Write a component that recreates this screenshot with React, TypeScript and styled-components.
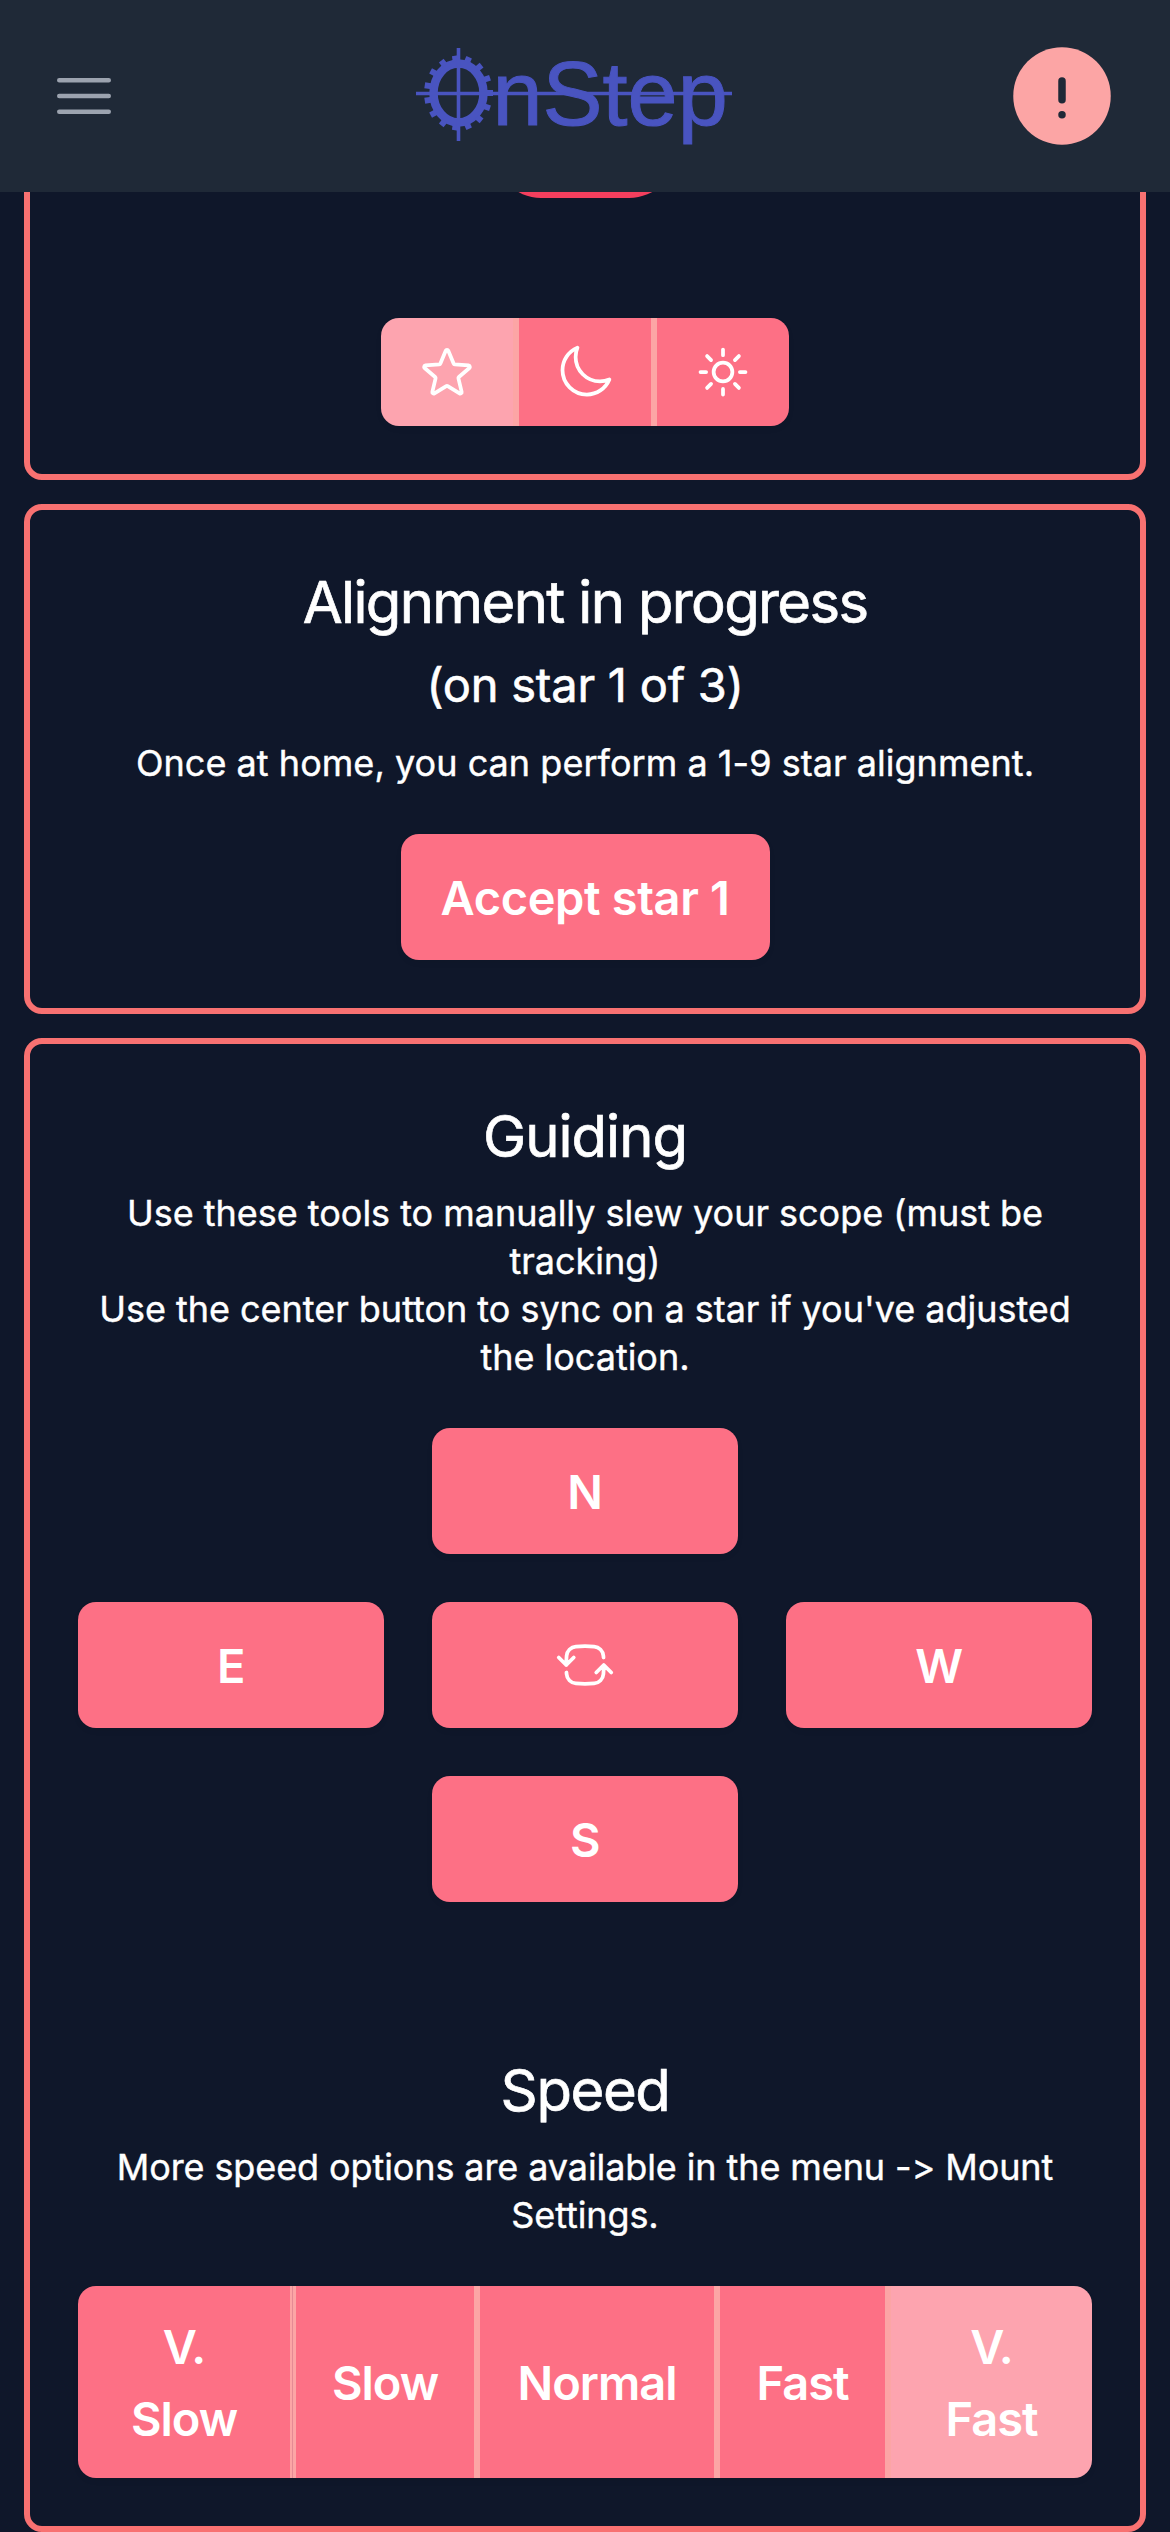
import React from "react";
import styled, { createGlobalStyle } from "styled-components";

const color = {
  page: "#0f172a",
  header: "#1f2937",
  border: "#f87171",
  button: "#fd7085",
  active: "#fda4af",
  divider: "#fca5a5",
  seam: "#e58a94",
  logo: "#4954c0",
};

const GlobalStyle = createGlobalStyle`
  * { box-sizing: border-box; }
  html, body {
    margin: 0;
    background: ${color.page};
  }
  body {
    height: 2532px;
    overflow: hidden;
    color: #fff;
    font-family: Inter, "Liberation Sans", sans-serif;
    font-feature-settings: "calt" 0, "liga" 0;
    font-variant-ligatures: none;
  }
  button {
    margin: 0;
    border: 0;
    padding: 0;
    color: inherit;
    font: inherit;
  }
`;

const Header = styled.header`
  position: fixed;
  inset: 0 0 auto 0;
  z-index: 10;
  height: 192px;
  padding: 0 48px;
  display: grid;
  grid-template-columns: 1fr auto 1fr;
  align-items: center;
  background: ${color.header};
`;

const MenuButton = styled.button`
  justify-self: start;
  display: flex;
  background: none;
  color: #9ca3af;
`;

const LogoLink = styled.a`
  display: flex;
  margin-right: 23px;
`;

const AlertButton = styled.button`
  justify-self: end;
  display: flex;
  margin-right: -48px;
  padding-right: 48px;
  background: none;
  color: ${color.divider};
`;

const Main = styled.main`
  display: flex;
  flex-direction: column;
  gap: 24px;
  padding: 48px 24px 0;
`;

const Card = styled.section`
  display: flex;
  flex-direction: column;
  align-items: center;
  padding: 48px;
  border: 6px solid ${color.border};
  border-radius: 18px;
  text-align: center;
`;

const StatusPill = styled.div`
  width: 184px;
  height: 96px;
  margin-bottom: 120px;
  border-radius: 48px;
  background: #f43f5e;
`;

const Title = styled.h2<{ $tracking: number }>`
  margin: 0 0 -2px;
  padding-top: 2px;
  font-size: 58px;
  line-height: 84px;
  font-weight: 400;
  letter-spacing: ${(p) => p.$tracking}px;
  -webkit-text-stroke: 0.7px currentColor;
`;

const Subtitle = styled.h3`
  margin: 7px 0 17px;
  font-size: 47px;
  line-height: 72px;
  font-weight: 400;
  letter-spacing: -0.23px;
  -webkit-text-stroke: 0.6px currentColor;
`;

const Text = styled.p<{ $top?: number; $tracking?: number }>`
  margin: ${(p) => p.$top ?? 0}px 0 47px;
  padding-top: 1px;
  font-size: 36px;
  line-height: 48px;
  letter-spacing: ${(p) => p.$tracking ?? 0}px;
  -webkit-text-stroke: 0.4px currentColor;
`;

const Button = styled.button`
  height: 126px;
  padding-top: 2px;
  border-radius: 18px;
  display: flex;
  align-items: center;
  justify-content: center;
  background: ${color.button};
  box-shadow: 0 3px 6px rgba(0, 0, 0, 0.05);
  font-size: 47px;
  line-height: 72px;
  font-weight: 600;
  letter-spacing: -0.38px;
`;

const AcceptButton = styled(Button)`
  width: 369px;
`;

const DirectionPad = styled.div`
  width: 100%;
  margin-bottom: 144px;
  display: grid;
  grid-template-columns: repeat(3, 1fr);
  grid-template-areas:
    ". n ."
    "e sync w"
    ". s .";
  gap: 48px;
`;

const PadButton = styled(Button)<{ $area: string; $icon?: boolean }>`
  grid-area: ${(p) => p.$area};
  padding-top: ${(p) => (p.$icon ? 0 : 2)}px;
`;

const Group = styled.div<{ $columns: string; $height: number }>`
  display: grid;
  grid-template-columns: ${(p) => p.$columns};
  height: ${(p) => p.$height}px;
  border-radius: 18px;
  overflow: hidden;
  box-shadow: 0 3px 6px rgba(0, 0, 0, 0.05);
`;

const Segment = styled.button<{ $active?: boolean }>`
  display: flex;
  align-items: center;
  justify-content: center;
  background: ${(p) => (p.$active ? color.active : color.button)};

  &:not(:last-child) {
    border-right: 6px solid ${color.divider};
  }
`;

const SpeedSegment = styled(Segment)<{ $seam?: boolean }>`
  padding-top: 2px;
  font-size: 47px;
  line-height: 72px;
  font-weight: 600;
  letter-spacing: -1px;

  &:not(:last-child) {
    border-image: ${(p) =>
      p.$seam
        ? `linear-gradient(to left, ${color.divider} 3px, ${color.seam} 3px 4px, ${color.divider} 4px) 0 6 0 0`
        : "none"};
  }
`;

const StrokeIcon = styled.svg<{ $size: number; $mirrored?: boolean }>`
  width: ${(p) => p.$size}px;
  height: ${(p) => p.$size}px;
  fill: none;
  stroke: currentColor;
  stroke-width: 1.5;
  stroke-linecap: round;
  stroke-linejoin: round;
  transform: ${(p) => (p.$mirrored ? "scaleX(-1)" : "none")};
`;

const LogoSvg = styled.svg`
  display: block;
  width: 316px;
  height: 110px;
  overflow: visible;
`;

const paths = {
  menu: "M3.75 6.75h16.5M3.75 12h16.5m-16.5 5.25h16.5",
  star: "M11.48 3.499a.562.562 0 011.04 0l2.125 5.111a.563.563 0 00.475.345l5.518.442c.499.04.701.663.321.988l-4.204 3.602a.563.563 0 00-.182.557l1.285 5.385a.562.562 0 01-.84.61l-4.725-2.885a.563.563 0 00-.586 0L6.982 20.54a.562.562 0 01-.84-.61l1.285-5.386a.562.562 0 00-.182-.557l-4.204-3.602a.563.563 0 01.321-.988l5.518-.442a.563.563 0 00.475-.345L11.48 3.5z",
  moon: "M21.752 15.002A9.718 9.718 0 0118 15.75c-5.385 0-9.75-4.365-9.75-9.75 0-1.33.266-2.597.748-3.752A9.753 9.753 0 003 11.25C3 16.635 7.365 21 12.75 21a9.753 9.753 0 009.002-5.998z",
  sun: "M12 3v2.25m6.364.386l-1.591 1.591M21 12h-2.25m-.386 6.364l-1.591-1.591M12 18.75V21m-4.773-4.227l-1.591 1.591M5.25 12H3m4.227-4.773L5.636 5.636M15.75 12a3.75 3.75 0 11-7.5 0 3.75 3.75 0 017.5 0z",
  sync: "M19.5 12c0-1.232-.046-2.453-.138-3.662a4.006 4.006 0 00-3.7-3.7 48.678 48.678 0 00-7.324 0 4.006 4.006 0 00-3.7 3.7c-.017.22-.032.441-.046.662M19.5 12l3-3m-3 3l-3-3m-12 3c0 1.232.046 2.453.138 3.662a4.006 4.006 0 003.7 3.7 48.656 48.656 0 007.324 0 4.006 4.006 0 003.7-3.7c.017-.22.032-.441.046-.662M4.5 12l3 3m-3-3l-3 3",
};

function Icon({ name, size = 60, mirrored }: { name: keyof typeof paths; size?: number; mirrored?: boolean }) {
  return (
    <StrokeIcon viewBox="0 0 24 24" $size={size} $mirrored={mirrored} aria-hidden="true">
      <path d={paths[name]} />
    </StrokeIcon>
  );
}

const TEETH = 15;

function Logo() {
  return (
    <LogoSvg viewBox="0 -7 316 110" role="img" aria-label="OnStep">
      <g stroke={color.logo} fill="none">
        <ellipse cx="42.5" cy="45" rx="25" ry="29.5" strokeWidth="8.5" />
        {Array.from({ length: TEETH }, (_, i) => {
          const a = (i / TEETH) * Math.PI * 2;
          const cos = Math.cos(a);
          const sin = Math.sin(a);
          return (
            <line
              key={i}
              x1={42.5 + 27 * cos}
              y1={45 + 32 * sin}
              x2={42.5 + 34.5 * cos}
              y2={45 + 37.5 * sin}
              strokeWidth="6"
            />
          );
        })}
        <path d="M42.5 0V93M0 45.5H316" strokeWidth="3.6" />
      </g>
      <text
        x="76.5"
        y="77"
        fontFamily='"Liberation Sans", Arial, sans-serif'
        fontSize="90"
        fill={color.logo}
        stroke={color.logo}
        strokeWidth="1"
      >
        nStep
      </text>
    </LogoSvg>
  );
}

function AlertIcon() {
  return (
    <svg width="120" height="120" viewBox="0 0 24 24" fill="none">
      <circle cx="12" cy="12" r="9.75" fill="currentColor" />
      <path d="M12 9v3.75M12 15.75v.001" stroke={color.header} strokeWidth="1.5" strokeLinecap="round" />
    </svg>
  );
}

export default function App() {
  return (
    <>
      <GlobalStyle />
      <Header>
        <MenuButton aria-label="Menu">
          <Icon name="menu" size={72} />
        </MenuButton>
        <LogoLink>
          <Logo />
        </LogoLink>
        <AlertButton aria-label="Alerts">
          <AlertIcon />
        </AlertButton>
      </Header>
      <Main>
        <Card>
          <StatusPill />
          <Group $columns="138px 138px 132px" $height={108}>
            <Segment $active aria-label="Stars">
              <Icon name="star" />
            </Segment>
            <Segment aria-label="Moon">
              <Icon name="moon" />
            </Segment>
            <Segment aria-label="Sun">
              <Icon name="sun" />
            </Segment>
          </Group>
        </Card>

        <Card>
          <Title $tracking={-1.65}>Alignment in progress</Title>
          <Subtitle>(on star 1 of 3)</Subtitle>
          <Text $tracking={0.04}>Once at home, you can perform a 1-9 star alignment.</Text>
          <AcceptButton>Accept star 1</AcceptButton>
        </Card>

        <Card>
          <Title $tracking={-1}>Guiding</Title>
          <Text $top={12} $tracking={-0.02}>
            Use these tools to manually slew your scope (must be
            <br />
            tracking)
            <br />
            Use the center button to sync on a star if you've adjusted
            <br />
            the location.
          </Text>
          <DirectionPad>
            <PadButton $area="n">N</PadButton>
            <PadButton $area="e">E</PadButton>
            <PadButton $area="sync" $icon aria-label="Sync">
              <Icon name="sync" mirrored />
            </PadButton>
            <PadButton $area="w">W</PadButton>
            <PadButton $area="s">S</PadButton>
          </DirectionPad>
          <Title $tracking={-1.4}>Speed</Title>
          <Text $top={12} $tracking={-0.1}>
            More speed options are available in the menu -&gt; Mount
            <br />
            Settings.
          </Text>
          <Group $columns="218px 184px 240px 171px 201px" $height={192}>
            <SpeedSegment $seam>
              V.
              <br />
              Slow
            </SpeedSegment>
            <SpeedSegment>Slow</SpeedSegment>
            <SpeedSegment>Normal</SpeedSegment>
            <SpeedSegment>Fast</SpeedSegment>
            <SpeedSegment $active>
              V.
              <br />
              Fast
            </SpeedSegment>
          </Group>
        </Card>
      </Main>
    </>
  );
}
